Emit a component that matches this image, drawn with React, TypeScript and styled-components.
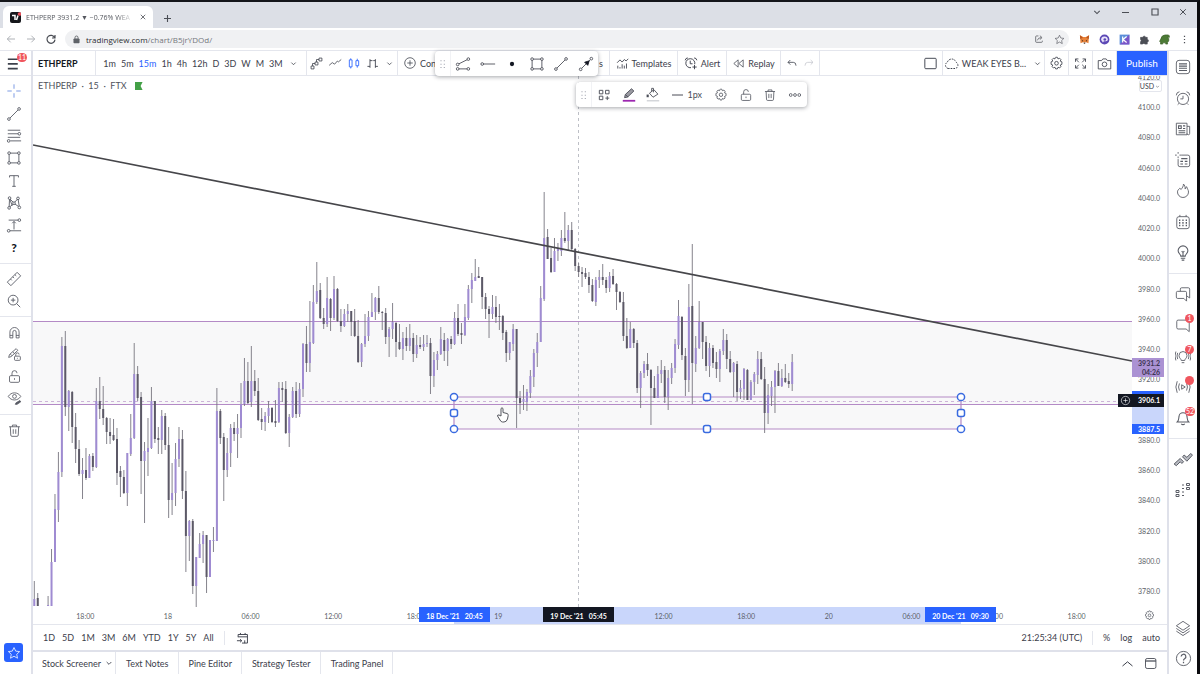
import React from "react";
import styled, { createGlobalStyle } from "styled-components";

const c = {
  text: "#3c404b",
  soft: "#6b6e78",
  line: "#e4e6ed",
  frame: "#dfe1ea",
  blue: "#2962ff",
  up: "#9f8bd2",
  down: "#5c5967",
  wick: "#77757f",
  zone: "#b48ac6",
};

const GlobalStyle = createGlobalStyle`
  * { box-sizing: border-box; }
  body { margin: 0; background: #fff; font-family: Lato, "Liberation Sans", sans-serif; font-size: 9px; color: ${c.text}; }
  button { font: inherit; color: inherit; background: none; border: 0; padding: 0; margin: 0; }
  svg { display: block; flex: none; }
`;

/* ---------- icons, drawn on an 18 unit grid ---------- */

const dot = (x: number, y: number, r = 1.5) => <circle key={`${x}-${y}`} cx={x} cy={y} r={r} fill="#fff" />;

const icons: Record<string, React.ReactNode> = {
  menu: <path d="M3 4.5h10.5M3 9.5h10.5M3 14.5h10.5" strokeWidth="1.8" />,
  cross: <path d="M9 1.5v5M9 11.5v5M1.500 9h5M11.500 9h5" />,
  trend: <><path d="M4 14 14 4" />{dot(3.300, 14.700)}{dot(14.700, 3.300)}</>,
  fib: <><path d="M2 2.500h14M2 6.500h12M2 10.500h14M5 14.500h12" />{dot(15, 6.500)}{dot(3, 14.500)}</>,
  rect: <><path d="M3.500 3.500h11v11h-11z" />{[dot(3.5, 3.5), dot(14.5, 3.5), dot(3.5, 14.5), dot(14.5, 14.5)]}</>,
  type: <path d="M4 5V3h10v2M9 3v12M7 15h4" />,
  pattern: <><path d="M3.500 14 4 4l5 5 4.500-5L15 13.500 9 9.500 3.500 14M4 4l3 8" />{[dot(3.5, 14.5), dot(4, 3.5), dot(9, 9.2), dot(13.5, 3.8), dot(15, 14)]}</>,
  forecast: <><path d="M3 3.500h12M3 15.500h14M9 14V5M7 7l2-2 2 2" />{dot(15, 3.500)}{dot(3, 15.500)}</>,
  ruler: <path d="M1.500 12.500 12.500 1.500 16.500 5.500 5.500 16.500zM5 9l1.500 1.500M7.500 6.500 9 8M10 4l1.500 1.500" />,
  zoom: <><circle cx="8" cy="8" r="5.500" /><path d="m12 12 4 4M8 5.500v5M5.500 8h5" /></>,
  magnet: <path d="M3.500 15.500V8.500a5.500 5.500 0 0 1 11 0v7h-3.500v-7a2 2 0 0 0-4 0v7zM3.500 12.500H7M11 12.500h3.500" />,
  pencilLock: <><path d="M2 12.500 3 9l8-7 2 2-8 7.500zM4 8.500l2 2M7 6l2 2" /><rect x="9" y="11" width="7" height="5" rx="1" /><path d="M10.500 11V9a2 2 0 0 1 4 0M12.500 13v1" /></>,
  unlock: <><rect x="3" y="8" width="12" height="8" rx="1.500" /><path d="M6 8V5a3 3 0 0 1 6 0M9 11v2" /></>,
  eye: <><path d="M1.500 6.500C5 .8 13 .8 16.500 6.500 13 12.200 5 12.200 1.500 6.500z" /><circle cx="9" cy="6.500" r="2.300" /><path d="m10 16 1-2 4.500-2.500 1 1.500-4.500 3z" fill="currentColor" /></>,
  trash: <path d="M2.500 4.500h13M6.500 4.500v-2h5v2M4 4.500l.5 10a1.500 1.500 0 0 0 1.500 1.500h6a1.500 1.500 0 0 0 1.500-1.500l.5-10M7.500 7.500v5.500M10.500 7.500v5.500" />,
  star: <path d="m9 2 2.200 4.600 5 .6-3.700 3.500 1 5L9 13.200l-4.500 2.500 1-5L1.800 7.200l5-.6z" />,
  bars: <path d="M1.500 12.500h4v4h-4zM7 7h4v4H7zM12.500 1.500h4v4h-4zM3.500 12.500V9H7M9 7V3.500h3.500" strokeWidth="1.100" />,
  line: <path d="m1.500 12 4-3.500 3 2 3.500-4 1.500 1L17 4.500" />,
  candles: <path d="M3 5h3.500v9H3zM4.800 3v2M4.800 14v2M11.500 6H15v6.500h-3.500zM13.200 3.500V6M13.200 12.500V15" strokeWidth="1.100" />,
  hilo: <path d="M5.500 3v12M5.500 5H9M5.500 13H2M13 3v12M13 5h-3M13 13h3.500" strokeWidth="1.200" />,
  plusCircle: <><circle cx="9" cy="9" r="6.800" /><path d="M9 5.500v7M5.500 9h7" /></>,
  templates: <path d="m1.500 8 4-4 3 3 3-3.500 2.500 2 3-3M2.500 12v4M5.500 14v2M8.500 10v6M11.500 12v4M14.500 9v7" strokeWidth="1.200" />,
  alertPlus: <><path d="M13.800 10.500A5.800 5.800 0 1 0 9 15M8 6v4h3M1.500 5.500a3.500 3.500 0 0 1 3.500-3M16.500 5.500a3.500 3.500 0 0 0-3.500-3M13.500 11.500v5.500M10.800 14.200h5.500" strokeWidth="1.200" /></>,
  replay: <path d="M8.500 4v10L2.500 9zM15.500 4v10L9.500 9z" />,
  undo: <path d="M6.500 4.500 3 8l3.500 3.500M3 8h8q4 0 4 5" strokeWidth="1.200" />,
  redo: <path d="M11.500 4.500 15 8l-3.500 3.500M15 8H7q-4 0-4 5" strokeWidth="1.200" />,
  square: <rect x="3" y="3.500" width="12" height="11" rx="1" />,
  cloud: <path d="M5 15a4 4 0 0 1-1-7.500 5.500 5.500 0 0 1 10.500 0A4 4 0 0 1 13.500 15z" strokeDasharray="2 1.300" strokeWidth="1.200" />,
  gear: <><path d="m7.500 2 .5-.5h2l.8 2 2-.8 1.500 1.500-.8 2 2 .8v3l-2 .8.8 2-1.500 1.500-2-.8-.8 2H8l-.8-2-2 .8-1.500-1.500.8-2-2-.8V7l2-.8-.8-2 1.500-1.500 2 .8z" /><circle cx="9" cy="8.700" r="2.200" /></>,
  expand: <path d="M3 7V3.500h3.500M3 3.500l4 4M15 7V3.500h-3.500M15 3.500l-4 4M3 11v3.500h3.500M3 14.500l4-4M15 11v3.500h-3.500M15 14.500l-4-4" />,
  camera: <><path d="M1.500 5.500h4l1.500-2h4l1.500 2h4v10h-15z" /><circle cx="9" cy="10" r="2.800" /></>,
  chevron: <path d="m5.500 7.500 3.500 3.500 3.500-3.500" strokeWidth="1.300" />,
  chevronUp: <path d="m3 12 6-5 6 5" strokeWidth="1.200" />,
  grip: <path d="M6 3.500v1.500M11 3.500v1.500M6 8.500v1.500M11 8.500v1.500M6 13.500v1.500M11 13.500v1.500" stroke="#a8abb5" strokeWidth="1.800" />,
  channel: <><path d="m4 9 10-5M4 14.500h10" />{[dot(3, 9.5), dot(15, 3.5), dot(3, 14.5), dot(15, 14.5)]}</>,
  ray: <><path d="M3 9h14" />{dot(2.500, 9)}</>,
  point: <circle cx="9" cy="9" r="2.400" fill="#131722" stroke="none" />,
  arrow: <><path d="M4 14 14 4" /><path d="m12.500 5.500-1.500 5-3.500-3.500z" fill="#131722" stroke="#131722" />{dot(3, 15)}{dot(15, 3)}</>,
  grid: <path d="M3 3h4.500v4.500H3zM11 3h4.500v4.500H11zM3 10.500h4.500V15H3zM13.200 10.500v5M10.800 13h5" strokeWidth="1.200" />,
  pencil: <><path d="m4 12 .8-3.500 7-6.500 2.700 2.500-7 6.800zM5 8.500l3 2.800" fill="#9a9aa2" /><path d="M2 15.500h14" stroke="#9c27b0" strokeWidth="2" /></>,
  fill: <><path d="m5 7 5-4 4.500 5-5.500 3.500zM9.500 6V1.500h-2V5" /><path d="M3 8.500v3" strokeWidth="2.400" /><path d="M2 15.500h14" stroke="#cfd1d6" strokeWidth="1.500" /></>,
  more: <><circle cx="3.500" cy="9" r="1.800" /><circle cx="9" cy="9" r="1.800" /><circle cx="14.500" cy="9" r="1.800" /></>,
  calendarGo: <path d="M4 8V4.500h12v11h-4M4 7.500h12M7 2.500v2M13 2.500v2M2.500 12.500h6M6.500 10.500l2.200 2-2.200 2M12.500 12v3.500H9" strokeWidth="1.200" />,
  list: <><rect x="1.500" y="1.500" width="15" height="15" rx="3" /><path d="M4.500 5.500h9M4.500 8h9M4.500 10.500h9M4.500 13h9" strokeWidth="1.200" /></>,
  alarm: <><circle cx="9" cy="10" r="6.300" /><path d="M9 6.500V10H6M1.500 6a4 4 0 0 1 3.500-4M16.500 6A4 4 0 0 0 13 2M4.500 15 3 16.500M13.500 15l1.500 1.500" /></>,
  news: <><path d="M1.500 2.500h12v13h-12zM13.500 6h3v8a1.500 1.500 0 0 1-3 0" /><path d="M4 5.500h3v3H4zM9 5.500h2.500M9 8.500h2.500M4 11h7.500M4 13.200h7.500" strokeWidth="1.200" /></>,
  dataWindow: <><path d="M7 3.500h7.500a2 2 0 0 1 2 2v9a2 2 0 0 1-2 2h-9a2 2 0 0 1-2-2V8M3.500 0v2M3.500 5v2M0 3.500h2M5 3.500h2" /><path d="M7 7.500h7M6 10.500h3M11 10.500h3M6 13.500h3M11 13.500h3" strokeWidth="1.400" /></>,
  flame: <path d="M2.800 10a6.200 6.200 0 0 0 12.400.2C15.200 7.500 13.500 6.500 13.200 4.200c-1.200.6-1.500 1.600-1.700 2.600C11.500 4.500 11 2.500 9.500 1.200 9.600 4 8 5.500 7 7.200L5.300 6C4 7.200 2.800 8.300 2.800 10z" />,
  calendar: <><rect x="2" y="3" width="14" height="13.500" rx="2.500" /><path d="M5.500 1v2M12.500 1v2" /><path d="M4.500 7h1.500M8.200 7h1.500M12 7h1.500M4.500 10h1.500M8.200 10h1.500M12 10h1.500M4.500 13h1.500M8.200 13h1.500M12 13h1.500" strokeWidth="1.800" /></>,
  bulb: <path d="M6.500 12.500c0-2-3-3-3-6a5.500 5.500 0 0 1 11 0c0 3-3 4-3 6zM6.500 15h5M7.500 17h3M9 12.500V8M7.500 7 9 8.500 10.500 7" strokeWidth="1.200" />,
  chats: <path d="M6 6V3.500A1.500 1.500 0 0 1 7.500 2H15a1.500 1.500 0 0 1 1.500 1.500v10L13 11M3 6h8.500A1.500 1.500 0 0 1 13 7.500V17l-3-3H3a1.500 1.500 0 0 1-1.500-1.500v-5A1.500 1.500 0 0 1 3 6z" />,
  chat: <path d="M3.500 3.500h11A1.500 1.500 0 0 1 16 5v11.500L12.500 13.500h-9A1.500 1.500 0 0 1 2 12V5a1.500 1.500 0 0 1 1.500-1.500z" />,
  ideas: <path d="M7 14c0-2-2.500-2.500-2.500-5.500a4.500 4.500 0 0 1 9 0c0 3-2.500 3.500-2.500 5.500zM7.500 16.500h3M3 5.500Q1.500 9 3 12.500M15 5.500q1.500 3.500 0 7M1 4Q-1 9 1 14M17 4q2 5 0 10" />,
  stream: <path d="m7.500 6.500 4 2.500-4 2.500zM5 5Q3 9 5 13M13 5q2 4 0 8M2.500 2.500Q-.5 9 2.500 15.500M15.500 2.500q3 6.500 0 13" />,
  bell: <path d="M2.500 13.500h13c-2-2-1.500-3.500-2-6a4.500 4.500 0 0 0-9 0c-.5 2.500 0 4-2 6zM7 15.500q2 2 4 0" strokeWidth="1.200" />,
  orderPanel: <path d="m1 13.500 5.500-5 3 3L8 13l-1.500-1.500L3 15zM8.500 7 10 5.500l2.500 2L16 4l1.500 1.500-5 5.500z" fill="#b9bbc2" strokeWidth="0.900" />,
  dom: <path d="M2 9.500h3v2H2zM2 13.500h3v2H2zM8 4h2M8 7.500h2M8 11h2M8 14.500h2M12.500 2.500h3v2h-3zM12.500 6.500h3v2h-3z" />,
  layers: <path d="m9 1.500 7.500 5L9 11.500l-7.500-5zM1.500 9.500l7.500 5 7.500-5M1.500 12.500l7.500 5 7.500-5" />,
  help: <><circle cx="9" cy="9" r="7.500" /><path d="M6.500 7a2.500 2.500 0 1 1 3.700 2.200Q9 10 9 11M9 12.500V14" strokeWidth="1.300" /></>,
  windowIcon: <><rect x="3" y="3" width="12.500" height="12" rx="2" /><path d="M3 6h12.500" strokeWidth="1.400" /></>,
  back: <path d="M15 9H3.500M8.500 4l-5 5 5 5" strokeWidth="1.400" />,
  forward: <path d="M3 9h11.500M9.500 4l5 5-5 5" strokeWidth="1.400" />,
  reload: <path d="M14.500 7A6 6 0 1 0 15 10M15 3v4.500h-4.500" strokeWidth="1.800" />,
  padlock: <><rect x="3.500" y="7.500" width="11" height="8.500" rx="1" fill="currentColor" /><path d="M6 7.500V5a3 3 0 0 1 6 0v2.500" strokeWidth="1.800" /></>,
  share: <path d="M8 3.500H4.500A1.500 1.500 0 0 0 3 5v8.500A1.500 1.500 0 0 0 4.500 15h9a1.500 1.500 0 0 0 1.500-1.500V12M6 11.500q1-5 7-5M10.500 3l4 3.500-4 3.500" strokeWidth="1.300" />,
  puzzle: <path d="M2.500 5.500h4a2 2 0 1 1 4 0h3v3.500a2 2 0 1 1 0 4v3.500h-4a2 2 0 0 0-3.500 0H2.500v-4a2 2 0 0 0 0-3.500z" fill="currentColor" />,
  dots: <path d="M9 3v2M9 8v2M9 13v2" strokeWidth="2" />,
  minimize: <path d="M2 9h14" strokeWidth="2" />,
  maximize: <path d="M3.500 3.500h11v11h-11z" strokeWidth="2" />,
  close: <path d="m4 4 10 10M14 4 4 14" strokeWidth="1.800" />,
  plus: <path d="M9 2v14M2 9h14" strokeWidth="2.200" />,
  fox: <><path d="m1.500 2 5.500 3h4l5.500-3-.5 6-.5 7-4-1.500H6.500L2.500 15 2 8z" fill="#e9833a" stroke="none" /><path d="m4 9 3 2-1 1.500zM14 9l-3 2 1 1.500zM7.500 14h3l-.5 2H8z" fill="#4a2f20" stroke="none" /><path d="m1.500 2 5 4-4.500 2zM16.500 2l-5 4L16 8z" fill="#b9561f" stroke="none" /></>,
  orb: <><circle cx="9" cy="9" r="8" fill="#5c48b5" stroke="none" /><path d="M3.500 10a5.500 5.500 0 0 1 11-1q0 3-3 3H8l-1.500 2z" fill="#e9e4fa" stroke="none" /><circle cx="9.500" cy="9" r="2.200" fill="#5c48b5" stroke="none" /></>,
  kBox: <><path d="M1 1h16v16H1z" fill="#5b8fd9" stroke="none" /><path d="M17 1v16H1z" fill="#7a55c8" stroke="none" /><path d="M6 4v10M12.500 4 6.500 9l6 5" stroke="#fff" strokeWidth="2" /></>,
  dino: <path d="M3 8q1-6 7-6.500h5.500q2 1 1.500 4h-3l2 2v4l-2 2v3H11v-2H6v2H2.500v-3L1 12z" fill="#4c7a35" stroke="#355923" />,
};

const Icon = ({ name, size = 16 }: { name: string; size?: number }) => (
  <svg width={size} height={size} viewBox="0 0 18 18" fill="none" stroke="currentColor" aria-hidden="true">
    {icons[name]}
  </svg>
);

/* ---------- browser window ---------- */

const Window = styled.div`
  display: flex;
  flex-direction: column;
  height: 100vh;
  min-height: 640px;
  border-top: 2px solid #14151a;
  border-right: 3px solid #0b0b0e;
  font-family: Lato, "Liberation Sans", sans-serif;
`;

const TabStrip = styled.div`
  display: flex;
  align-items: flex-end;
  height: 26px;
  padding-left: 3px;
  background: #dcdfe6;
`;

const BrowserTab = styled.div`
  display: flex;
  align-items: center;
  gap: 5px;
  width: 150px;
  height: 22px;
  padding: 0 6px 0 7px;
  border-radius: 6px 6px 0 0;
  background: #fff;
  font: 7px "Open Sans", sans-serif;
`;

const SiteMark = styled.svg`
  width: 11px;
  height: 11px;
`;

const TabTitle = styled.span`
  flex: 1;
  white-space: nowrap;
  color: #55585f;
  mask-image: linear-gradient(to right, #000 85%, transparent);
`;

const ChromeButton = styled.button<{ $w?: number; $color?: string }>`
  display: flex;
  align-items: center;
  justify-content: center;
  width: ${(p) => p.$w ?? 20}px;
  height: 20px;
  color: ${(p) => p.$color ?? "#4b4e55"};
`;

const WindowControls = styled.div`
  display: flex;
  align-self: flex-start;
  margin-left: auto;
`;

const AddressRow = styled.div`
  display: flex;
  align-items: center;
  height: 23px;
  padding: 0 3px 0 1px;
  border-bottom: 1px solid ${c.line};
`;

const AddressBox = styled.label`
  display: flex;
  flex: 1;
  align-items: center;
  gap: 5px;
  height: 18px;
  margin: 0 5px 0 4px;
  padding: 0 0 0 7px;
  border-radius: 9px;
  background: #f0f1f3;
  color: #5f6368;
`;

const Url = styled.a`
  flex: 1;
  color: #74777c;
  text-decoration: none;
  font: 8px "Open Sans", sans-serif;
  b { font-weight: 400; color: #2b2d31; }
`;

const BoxActions = styled.div`
  display: flex;
`;

/* ---------- application frame ---------- */

const Workspace = styled.div`
  display: flex;
  flex: 1;
  min-height: 0;
`;

const LeftBar = styled.nav`
  display: flex;
  flex-direction: column;
  width: 33px;
  border-right: 2px solid ${c.frame};
  padding-bottom: 12px;
`;

const MenuButton = styled.button`
  position: relative;
  display: flex;
  align-items: center;
  height: 25px;
  padding-left: 5px;
  border-bottom: 1px solid ${c.line};
`;

const Badge = styled.span<{ $left: number; $top: number }>`
  position: absolute;
  left: ${(p) => p.$left}px;
  top: ${(p) => p.$top}px;
  min-width: 9px;
  height: 9px;
  padding: 0 1px;
  border-radius: 5px;
  background: #f0565e;
  color: #fff;
  font-size: 7px;
  line-height: 9px;
  text-align: center;
`;

const ToolGroup = styled.div<{ $h: number }>`
  display: grid;
  grid-auto-rows: 1fr;
  height: ${(p) => p.$h}px;
  padding: 4px 0;
  & + & { border-top: 1px solid ${c.line}; }
`;

const Tool = styled.button<{ $color?: string }>`
  display: flex;
  align-items: center;
  justify-content: center;
  padding-right: 3px;
  color: ${(p) => p.$color ?? "#555862"};
  font-weight: 900;
  font-size: 12px;
`;

const FavoriteButton = styled.button`
  display: flex;
  align-items: center;
  justify-content: center;
  width: 19px;
  height: 19px;
  margin: auto 0 0 4px;
  border-radius: 3px;
  background: ${c.blue};
  color: #fff;
`;

const Center = styled.main`
  display: flex;
  flex: 1;
  flex-direction: column;
  min-width: 0;
`;

const RightBar = styled.aside`
  display: flex;
  flex-direction: column;
  width: 30px;
  border-left: 2px solid ${c.frame};
  hr { width: 100%; margin: 5px 0 4px; border: 0; border-top: 1px solid ${c.line}; }
`;

const SideButton = styled.button<{ $push?: boolean }>`
  position: relative;
  display: flex;
  flex: none;
  align-items: center;
  justify-content: center;
  height: 31px;
  margin-top: ${(p) => (p.$push ? "auto" : "0")};
  color: #5a5d66;
`;

/* ---------- header ---------- */

const Header = styled.div`
  position: relative;
  display: flex;
  height: 25px;
  border-bottom: 1px solid ${c.line};
`;

const Cell = styled.div<{ $w: number; $gap?: number; $edge?: boolean; $start?: boolean }>`
  display: flex;
  flex: none;
  align-items: center;
  justify-content: ${(p) => (p.$start ? "flex-start" : "center")};
  gap: ${(p) => p.$gap ?? 3}px;
  width: ${(p) => p.$w}px;
  padding-left: ${(p) => (p.$start ? 5 : 0)}px;
  border-right: 1px solid ${(p) => (p.$edge === false ? "transparent" : c.line)};
  white-space: nowrap;
`;

const LabelButton = styled.button<{ $on?: boolean; $bold?: boolean; $color?: string }>`
  display: flex;
  align-items: center;
  gap: 3px;
  white-space: nowrap;
  font-weight: ${(p) => (p.$bold ? 700 : 400)};
  color: ${(p) => p.$color ?? (p.$on ? c.blue : c.text)};
`;

const Spacer = styled.div`
  flex: 1;
`;

const Publish = styled.button`
  width: 50px;
  background: ${c.blue};
  color: #fff;
  font-size: 10px;
`;

const FloatingBar = styled.div<{ $left: number; $top: number; $w: number }>`
  position: absolute;
  z-index: 3;
  left: ${(p) => p.$left}px;
  top: ${(p) => p.$top}px;
  display: flex;
  width: ${(p) => p.$w}px;
  height: 25px;
  border-radius: 4px;
  background: #fff;
  box-shadow: 0 1px 4px rgba(30, 34, 45, 0.4);
`;

const FloatButton = styled.button<{ $wide?: boolean }>`
  display: flex;
  flex: ${(p) => (p.$wide ? "0 0 44px" : "1 1 0")};
  align-items: center;
  justify-content: center;
  gap: 4px;
  color: #4a4d57;
`;

const Grip = styled.div`
  display: flex;
  align-items: center;
  justify-content: center;
  width: 16px;
  border-right: 1px solid #f1f2f5;
`;

/* ---------- chart ---------- */

const ChartRow = styled.div`
  position: relative;
  display: flex;
  flex: 1;
  min-height: 0;
`;

const Plot = styled.div`
  position: relative;
  flex: 1;
  min-width: 0;
  overflow: hidden;
  > svg { position: absolute; width: 100%; height: 100%; }
`;

const Legend = styled.div`
  position: absolute;
  left: 5px;
  top: 4px;
  display: flex;
  align-items: center;
  gap: 8px;
  font-size: 9px;
  line-height: 12px;
  color: #50535d;
  white-space: pre;
`;

const Flag = styled.i`
  width: 8px;
  height: 8px;
  background: #43a047;
  clip-path: polygon(0 0, 100% 0, 75% 50%, 100% 100%, 0 100%);
`;

const PriceAxis = styled.div`
  position: relative;
  width: 35px;
  overflow: hidden;
`;

const PriceList = styled.div`
  display: flex;
  flex-direction: column;
  justify-content: space-between;
  height: 100%;
  margin-top: -5px;
  padding: 0 7px 5px 0;
  text-align: right;
  font-size: 7px;
  line-height: 12px;
  color: #5c5f69;
`;

const PriceTag = styled.div<{ $top: number; $h: number; $bg: string; $color?: string }>`
  position: absolute;
  top: ${(p) => p.$top}px;
  left: 0;
  right: 3px;
  height: ${(p) => p.$h}px;
  padding-right: 4px;
  background: ${(p) => p.$bg};
  color: ${(p) => p.$color ?? "#fff"};
  font-size: 7px;
  font-weight: 700;
  line-height: 9px;
  text-align: right;
  display: grid;
  align-content: center;
`;

const Currency = styled.button`
  position: absolute;
  top: 4px;
  right: 5px;
  display: flex;
  align-items: center;
  justify-content: center;
  width: 23px;
  height: 12px;
  border: 1px solid ${c.line};
  border-radius: 2px;
  background: #fff;
  font-size: 7px;
`;

const AddAlert = styled.button`
  position: absolute;
  top: 318px;
  right: 35px;
  width: 14px;
  height: 13px;
  display: flex;
  align-items: center;
  justify-content: center;
  background: #131722;
  color: #fff;
`;

const TimeRow = styled.div`
  display: flex;
  height: 18px;
  border-bottom: 1px solid ${c.line};
`;

const TimeScale = styled.div`
  position: relative;
  display: flex;
  flex: 1;
  padding: 0 14px 0 11px;
  font-size: 7px;
  line-height: 18px;
  text-align: center;
  color: #5c5f69;
  span { position: relative; flex: 1 1 0; }
`;

const TimeSpan = styled.div`
  position: absolute;
  left: 421px;
  width: 507px;
  height: 17px;
  background: #c9d6fb;
`;

const TimeTag = styled.div<{ $left: number; $dark?: boolean }>`
  position: absolute;
  left: ${(p) => p.$left}px;
  width: 71px;
  height: 15px;
  background: ${(p) => (p.$dark ? "#131722" : c.blue)};
  color: #fff;
  font-weight: 700;
  line-height: 18px;
  white-space: pre;
`;

const AxisCorner = styled.button`
  display: flex;
  align-items: center;
  justify-content: center;
  width: 35px;
`;

const RangeBar = styled.div`
  display: flex;
  align-items: center;
  justify-content: space-between;
  height: 27px;
  padding: 0 7px 0 10px;
  border-bottom: 2px solid ${c.frame};
`;

const RangeGroup = styled.div<{ $gap: number }>`
  display: flex;
  align-items: center;
  gap: ${(p) => p.$gap}px;
`;

const Divider = styled.i`
  width: 1px;
  height: 14px;
  background: ${c.line};
`;

const PanelTabs = styled.div`
  display: flex;
  height: 22px;
  padding-right: 5px;
`;

const PanelTab = styled.button<{ $menu?: boolean }>`
  display: flex;
  align-items: center;
  gap: 2px;
  padding: 0 ${(p) => (p.$menu ? 0 : 9)}px 0 ${(p) => (p.$menu ? 9 : 10)}px;
  border-right: 1px solid ${c.line};
`;

const PanelTool = styled.button`
  display: flex;
  align-items: center;
  justify-content: center;
  width: 23px;
`;

/* Fifteen minute candles: high, body top, body bottom, low (plot rows); the sign of the first value marks a falling bar. */
const bars: number[][] = [
  [581,599,606,606],[-593,598,606,606],[0],[0],[596,605,606,606],[549,562,606,606],[494,509,562,562],[452,472,510,522],[337,346,472,477],[-331,346,407,416],
  [390,391,407,431],[-391,392,427,443],[-413,427,449,463],[-440,449,474,476],[458,470,474,499],[-448,470,478,480],[454,456,478,478],[-453,456,467,471],[388,401,467,468],[-377,401,409,419],
  [-386,409,418,425],[-417,418,432,444],[-418,432,436,444],[-419,435,440,441],[-428,439,473,485],[-466,471,477,497],[-470,477,493,494],[453,453,493,506],[414,438,454,456],[343,374,438,439],
  [-366,374,398,401],[-392,397,461,494],[442,451,461,523],[418,448,452,476],[387,401,448,449],[-401,401,439,443],[-427,438,440,454],[410,416,440,454],[-413,416,445,450],[-427,445,500,518],
  [463,493,500,515],[443,459,493,506],[427,439,459,467],[-430,439,491,499],[-471,491,536,572],[520,521,536,561],[-519,521,586,594],[557,557,586,607],[533,544,558,558],[531,535,544,563],
  [-535,535,577,593],[540,540,577,577],[527,540,541,552],[388,411,541,541],[-409,411,438,444],[-433,437,470,501],[438,453,470,477],[424,428,453,467],[-422,428,434,441],[414,428,434,458],
  [383,404,428,438],[358,381,404,406],[-362,381,403,404],[346,381,402,407],[-370,381,391,396],[-378,391,420,421],[-408,419,422,430],[412,416,422,431],[401,408,416,423],[-407,408,422,423],
  [-400,421,423,427],[382,388,422,423],[-382,388,390,402],[-381,389,433,434],[414,417,433,447],[387,391,417,418],[-382,391,414,418],[383,389,414,417],[343,344,389,397],[-326,344,363,372],
  [301,342,363,372],[285,302,343,344],[262,291,302,304],[-283,290,318,319],[-308,318,324,329],[277,298,324,327],[-298,299,318,331],[276,289,318,320],[-288,289,321,322],[-309,321,326,332],
  [309,314,326,327],[304,311,314,322],[-311,311,322,336],[-309,321,336,337],[-320,336,362,363],[343,344,362,367],[314,336,344,347],[311,317,336,341],[293,312,317,317],[297,298,312,320],
  [-286,298,312,314],[-311,312,313,330],[-308,313,337,344],[327,329,337,357],[303,322,329,339],[-322,323,342,357],[-324,342,349,350],[332,338,349,360],[-327,338,346,351],[324,338,346,351],
  [-333,338,354,362],[335,345,354,358],[-337,345,347,349],[335,344,347,351],[335,343,344,347],[-338,343,376,394],[352,360,376,387],[351,354,360,370],[327,339,354,355],[-333,340,351,361],
  [338,339,351,366],[-336,339,344,349],[312,318,344,345],[-304,318,334,336],[-323,333,335,344],[304,317,335,336],[285,289,318,320],[273,280,289,303],[259,277,281,281],[-267,276,278,278],
  [-277,277,297,309],[-293,297,309,319],[-306,309,314,338],[295,307,314,319],[-296,307,317,323],[-304,316,317,330],[-315,316,333,340],[-330,332,353,362],[342,342,353,360],[324,329,344,351],
  [-329,329,398,428],[-391,398,403,414],[385,399,402,410],[389,392,402,411],[370,376,393,398],[349,353,377,387],[333,342,353,367],[286,298,342,342],[192,238,299,301],[-229,237,259,259],
  [-248,258,272,273],[238,251,272,272],[243,248,251,261],[230,238,251,256],[-212,238,241,243],[225,230,241,251],[-222,230,249,250],[-248,249,266,271],[-263,266,272,277],[-267,272,274,287],
  [-268,273,277,279],[-272,277,285,293],[-279,285,301,302],[277,280,302,306],[270,277,280,288],[-264,277,280,285],[-277,280,288,293],[272,276,288,292],[-269,276,284,285],[-283,284,292,310],
  [-291,292,302,303],[-292,302,336,341],[-318,336,348,349],[322,329,348,348],[-328,329,343,348],[-340,343,388,393],[371,373,388,408],[361,364,373,378],[-353,364,370,376],[-369,370,388,425],
  [-376,388,398,398],[366,374,398,398],[360,370,374,383],[-366,370,397,403],[370,378,397,410],[363,368,378,384],[339,344,368,373],[300,316,345,349],[-316,317,355,360],[-348,356,380,396],
  [284,307,380,392],[-244,306,363,404],[336,348,364,372],[301,322,348,349],[-322,322,342,359],[-336,342,366,371],[343,348,366,377],[-345,348,363,368],[-352,362,369,378],[349,351,369,382],
  [329,340,351,355],[-334,340,359,369],[-351,359,372,373],[362,363,372,397],[-361,364,392,401],[380,388,392,399],[368,369,389,400],[-369,370,400,400],[380,382,400,400],[372,374,382,395],
  [351,359,375,384],[-352,359,379,380],[-367,379,413,433],[384,395,413,424],[381,387,396,406],[370,371,387,413],[-363,371,386,386],[369,378,386,387],[-364,378,382,383],[-373,381,384,388],
  [354,362,384,391],
];

const STEP = 3.445;

const PriceChart = () => (
  <svg role="img" aria-label="ETHPERP 15 minute candles">
    <g transform="translate(-33 -76)">
      <path d="M33 321.500h1200v82.500H33zM454 404h507v25H454z" fill="#f8f8f9" />
      <path d="M578.500 76v540" stroke="#bdbfc6" strokeDasharray="3 3" />
      <path d="M33 401.500h1200" stroke="#cdb3d8" strokeDasharray="3 3" />
      <path d="M33 321.500h1200M33 404.500h1200" stroke={c.zone} strokeWidth="1.200" />
      <path d="M454 397h507v32H454z" stroke={c.zone} fill="none" strokeWidth="1.200" />
      {bars.map(([high, top, bottom, low], i) => {
        if (!high) return null;
        const x = 34.3 + i * STEP;
        return (
          <g key={i}>
            <path d={`M${x} ${Math.abs(high)}V${low}`} stroke={c.wick} strokeWidth="0.900" />
            <path d={`M${x} ${top}V${Math.max(bottom, top + 1)}`} stroke={high < 0 ? c.down : c.up} strokeWidth="2" />
          </g>
        );
      })}
      <path d="M33 145 1132 361" stroke="#46464a" strokeWidth="1.700" />
      <g fill="#fff" stroke="#3a6be0" strokeWidth="1.500">
        {[[454, 397], [961, 397], [454, 429], [961, 429]].map(([x, y]) => <circle key={`${x}${y}`} cx={x} cy={y} r="3.600" />)}
        {[[707, 397], [707, 429], [454, 413], [961, 413]].map(([x, y]) => <rect key={`${x}${y}`} x={x - 3.5} y={y - 3.5} width="7" height="7" rx="2" />)}
      </g>
      <path d="M501 416v-7.500q1-1.500 2 0v4l4 1q1.500.5 1.200 2l-.7 3.500q-1 3-3.500 3h-1.500q-1.500 0-2.500-2l-2.500-4q0-1.500 1.500-1z" fill="#fff" stroke="#55575e" />
    </g>
  </svg>
);

const prices = Array.from({ length: 18 }, (_, i) => (4120 - i * 20).toFixed(1));
const times = ["18:00", "18", "06:00", "12:00", "18:00", "19", "", "12:00", "18:00", "20", "06:00", "12:00", "18:00"];
const intervals = ["1m", "5m", "15m", "1h", "4h", "12h", "D", "3D", "W", "M", "3M"];
const ranges = ["1D", "5D", "1M", "3M", "6M", "YTD", "1Y", "5Y", "All"];

const sideTop = ["list", "alarm", "news", "dataWindow", "flame", "calendar", "bulb"];
const sideSocial: [string, string?][] = [["chats"], ["chat", "1"], ["ideas", "7"], ["stream", ""], ["bell", "52"]];

export default function App() {
  return (
    <Window>
      <GlobalStyle />
      <TabStrip>
        <BrowserTab>
          <SiteMark viewBox="0 0 11 11" aria-hidden="true">
            <rect width="11" height="11" rx="2" fill="#15161b" />
            <path d="M2 3.500h3V8M6.500 8l1.500-4.500" stroke="#fff" strokeWidth="1.500" fill="none" />
            <circle cx="9.500" cy="2" r="1.800" fill="#e8505b" />
          </SiteMark>
          <TabTitle>ETHPERP 3931.2 ▼ −0.76% WEA</TabTitle>
          <ChromeButton $w={9} aria-label="Close tab"><Icon name="close" size={8} /></ChromeButton>
        </BrowserTab>
        <ChromeButton $w={28} aria-label="New tab"><Icon name="plus" size={9} /></ChromeButton>
        <WindowControls>
          <ChromeButton $w={29} aria-label="Search tabs"><Icon name="chevron" size={14} /></ChromeButton>
          <ChromeButton $w={29} aria-label="Minimize"><Icon name="minimize" size={9} /></ChromeButton>
          <ChromeButton $w={29} aria-label="Maximize"><Icon name="maximize" size={10} /></ChromeButton>
          <ChromeButton $w={28} aria-label="Close"><Icon name="close" size={10} /></ChromeButton>
        </WindowControls>
      </TabStrip>
      <AddressRow>
        <ChromeButton $color="#a9acb1" aria-label="Back"><Icon name="back" size={12} /></ChromeButton>
        <ChromeButton $color="#a9acb1" aria-label="Forward"><Icon name="forward" size={12} /></ChromeButton>
        <ChromeButton aria-label="Reload"><Icon name="reload" size={12} /></ChromeButton>
        <AddressBox>
          <Icon name="padlock" size={9} />
          <Url href="#"><b>tradingview.com</b>/chart/B5jrYDOd/</Url>
          <BoxActions>
            <ChromeButton aria-label="Share"><Icon name="share" size={10} /></ChromeButton>
            <ChromeButton aria-label="Bookmark"><Icon name="star" size={11} /></ChromeButton>
          </BoxActions>
        </AddressBox>
        {["fox", "orb", "kBox", "puzzle", "dino", "dots"].map((n) => (
          <ChromeButton key={n} aria-label={n}><Icon name={n} size={11} /></ChromeButton>
        ))}
      </AddressRow>

      <Workspace>
        <LeftBar>
          <MenuButton aria-label="Menu">
            <Icon name="menu" size={17} />
            <Badge $left={17} $top={2}>11</Badge>
          </MenuButton>
          <ToolGroup $h={187}>
            <Tool $color="#6d8fe0" aria-label="Cross"><Icon name="cross" /></Tool>
            {["trend", "fib", "rect", "type", "pattern", "forecast"].map((n) => <Tool key={n} aria-label={n}><Icon name={n} /></Tool>)}
            <Tool $color="#131722">?</Tool>
          </ToolGroup>
          <ToolGroup $h={53}>
            {["ruler", "zoom"].map((n) => <Tool key={n} aria-label={n}><Icon name={n} /></Tool>)}
          </ToolGroup>
          <ToolGroup $h={98}>
            {["magnet", "pencilLock", "unlock", "eye"].map((n) => <Tool key={n} aria-label={n}><Icon name={n} size={15} /></Tool>)}
          </ToolGroup>
          <ToolGroup $h={31}>
            <Tool aria-label="Remove drawings"><Icon name="trash" size={15} /></Tool>
          </ToolGroup>
          <FavoriteButton aria-label="Favorites"><Icon name="star" size={14} /></FavoriteButton>
        </LeftBar>

        <Center>
          <Header>
            <Cell $w={63} $start><LabelButton $bold $color="#131722">ETHPERP</LabelButton></Cell>
            <Cell $w={211} $gap={5}>
              {intervals.map((t) => <LabelButton key={t} $on={t === "15m"}>{t}</LabelButton>)}
              <Icon name="chevron" size={11} />
            </Cell>
            <Cell $w={91} $gap={5}>
              <LabelButton aria-label="Bars"><Icon name="bars" size={13} /></LabelButton>
              <LabelButton aria-label="Line"><Icon name="line" size={14} /></LabelButton>
              <LabelButton aria-label="Candles" $color={c.blue}><Icon name="candles" size={14} /></LabelButton>
              <LabelButton aria-label="High-low"><Icon name="hilo" size={13} /></LabelButton>
              <Icon name="chevron" size={11} />
            </Cell>
            <Cell $w={147} $edge={false} $start><LabelButton><Icon name="plusCircle" size={14} />Con</LabelButton></Cell>
            <Cell $w={65}><Spacer /><LabelButton>s</LabelButton><i /><i /></Cell>
            <Cell $w={68}><LabelButton><Icon name="templates" size={13} />Templates</LabelButton></Cell>
            <Cell $w={49}><LabelButton><Icon name="alertPlus" size={14} />Alert</LabelButton></Cell>
            <Cell $w={54}><LabelButton><Icon name="replay" size={13} />Replay</LabelButton></Cell>
            <Cell $w={39} $gap={5}>
              <LabelButton aria-label="Undo"><Icon name="undo" size={12} /></LabelButton>
              <LabelButton aria-label="Redo" $color="#c5c7ce"><Icon name="redo" size={12} /></LabelButton>
            </Cell>
            <Spacer />
            <Cell $w={25}><LabelButton aria-label="Layout"><Icon name="square" size={17} /></LabelButton></Cell>
            <Cell $w={102} $gap={6}>
              <LabelButton><Icon name="cloud" size={15} />WEAK EYES B...</LabelButton>
              <Icon name="chevron" size={11} />
            </Cell>
            <Cell $w={24}><LabelButton aria-label="Settings"><Icon name="gear" size={15} /></LabelButton></Cell>
            <Cell $w={24}><LabelButton aria-label="Fullscreen"><Icon name="expand" size={15} /></LabelButton></Cell>
            <Cell $w={24}><LabelButton aria-label="Snapshot"><Icon name="camera" size={15} /></LabelButton></Cell>
            <Publish>Publish</Publish>
            <FloatingBar $left={402} $top={0} $w={163}>
              <Grip><Icon name="grip" size={12} /></Grip>
              {["channel", "ray", "point", "rect", "trend", "arrow"].map((n) => (
                <FloatButton key={n} aria-label={n}><Icon name={n} /></FloatButton>
              ))}
            </FloatingBar>
            <FloatingBar $left={543} $top={31} $w={231}>
              <Grip><Icon name="grip" size={12} /></Grip>
              <FloatButton aria-label="Template"><Icon name="grid" size={14} /></FloatButton>
              <FloatButton aria-label="Line colour"><Icon name="pencil" /></FloatButton>
              <FloatButton aria-label="Fill colour"><Icon name="fill" /></FloatButton>
              <FloatButton $wide><svg width="11" height="2"><path d="M0 1h11" stroke="#4a4d57" /></svg>1px</FloatButton>
              <FloatButton aria-label="Settings"><Icon name="gear" size={14} /></FloatButton>
              <FloatButton aria-label="Lock"><Icon name="unlock" size={14} /></FloatButton>
              <FloatButton aria-label="Remove"><Icon name="trash" size={14} /></FloatButton>
              <FloatButton aria-label="More"><Icon name="more" size={14} /></FloatButton>
            </FloatingBar>
          </Header>

          <ChartRow>
            <Plot>
              <PriceChart />
              <Legend>{"ETHPERP  ·  15  ·  FTX"}<Flag /></Legend>
            </Plot>
            <PriceAxis>
              <PriceTag $top={320} $h={38} $bg="#c9d6fb" />
              <PriceList>{prices.map((p) => <span key={p}>{p}</span>)}</PriceList>
              <PriceTag $top={282} $h={19} $bg="#ab92d3" $color="#3b3450"><span>3931.2</span><span>04:26</span></PriceTag>
              <PriceTag $top={315} $h={12} $bg={c.blue} />
              <PriceTag $top={318} $h={13} $bg="#131722">3906.1</PriceTag>
              <PriceTag $top={348} $h={10} $bg={c.blue}>3887.5</PriceTag>
              <Currency>USD<Icon name="chevron" size={7} /></Currency>
            </PriceAxis>
            <AddAlert aria-label="Add alert"><Icon name="plusCircle" size={11} /></AddAlert>
          </ChartRow>

          <TimeRow>
            <TimeScale>
              <TimeSpan />
              {times.map((t, i) => <span key={i}>{t}</span>)}
              <TimeTag $left={386}>{"18 Dec '21   20:45"}</TimeTag>
              <TimeTag $left={510} $dark>{"19 Dec '21   05:45"}</TimeTag>
              <TimeTag $left={892}>{"20 Dec '21   09:30"}</TimeTag>
            </TimeScale>
            <AxisCorner aria-label="Axis settings"><Icon name="gear" size={11} /></AxisCorner>
          </TimeRow>

          <RangeBar>
            <RangeGroup $gap={10}>
              <RangeGroup $gap={7}>
                {ranges.map((r) => <LabelButton key={r}>{r}</LabelButton>)}
              </RangeGroup>
              <Divider />
              <LabelButton aria-label="Go to date"><Icon name="calendarGo" size={14} /></LabelButton>
            </RangeGroup>
            <RangeGroup $gap={10}>
              <LabelButton>21:25:34 (UTC)</LabelButton>
              <Divider />
              <LabelButton>%</LabelButton>
              <LabelButton>log</LabelButton>
              <LabelButton>auto</LabelButton>
            </RangeGroup>
          </RangeBar>

          <PanelTabs>
            <PanelTab $menu>Stock Screener<Icon name="chevron" size={12} /></PanelTab>
            {["Text Notes", "Pine Editor", "Strategy Tester", "Trading Panel"].map((t) => <PanelTab key={t}>{t}</PanelTab>)}
            <Spacer />
            <PanelTool aria-label="Expand panel"><Icon name="chevronUp" size={15} /></PanelTool>
            <PanelTool aria-label="Maximize panel"><Icon name="windowIcon" size={15} /></PanelTool>
          </PanelTabs>
        </Center>

        <RightBar>
          {sideTop.map((n) => <SideButton key={n} aria-label={n}><Icon name={n} /></SideButton>)}
          <hr />
          {sideSocial.map(([n, badge]) => (
            <SideButton key={n} aria-label={n}>
              <Icon name={n} />
              {badge !== undefined && <Badge $left={16} $top={5}>{badge}</Badge>}
            </SideButton>
          ))}
          <hr />
          <SideButton aria-label="Order panel"><Icon name="orderPanel" size={20} /></SideButton>
          <SideButton aria-label="Depth of market"><Icon name="dom" size={18} /></SideButton>
          <SideButton $push aria-label="Object tree"><Icon name="layers" /></SideButton>
          <SideButton aria-label="Help"><Icon name="help" size={17} /></SideButton>
        </RightBar>
      </Workspace>
    </Window>
  );
}
